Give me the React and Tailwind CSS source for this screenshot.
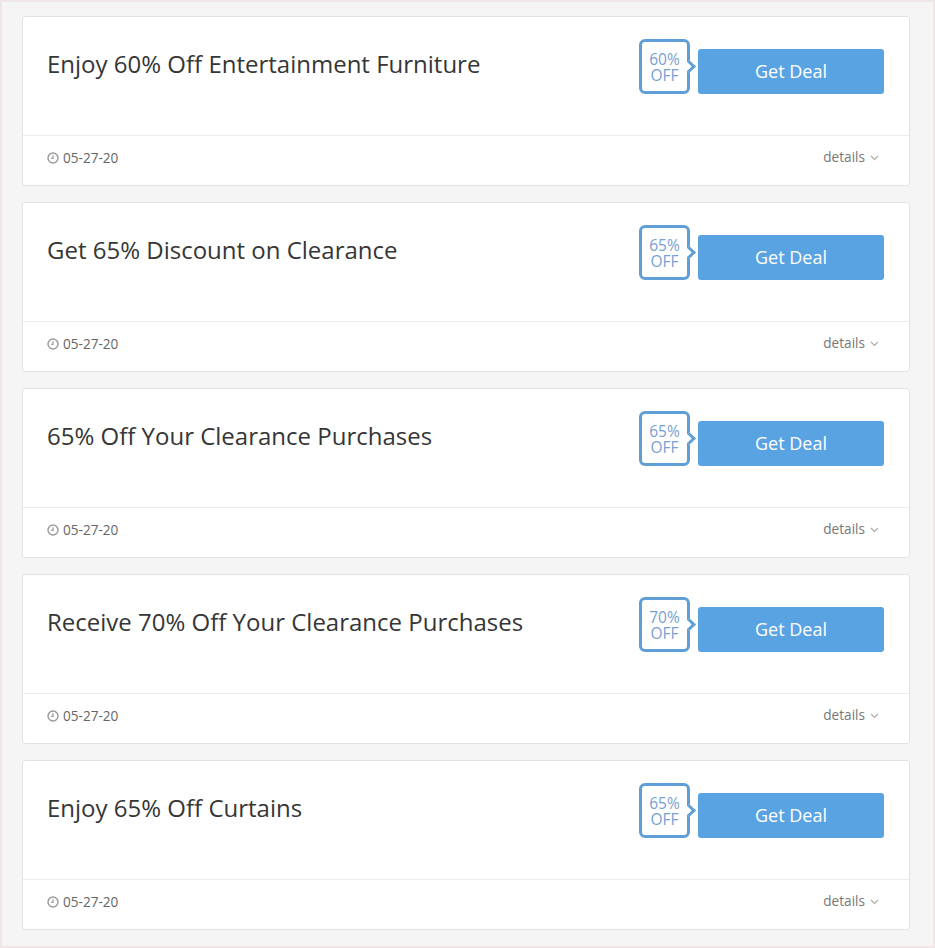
const deals = [
  { title: "Enjoy 60% Off Entertainment Furniture", pct: "60%" },
  { title: "Get 65% Discount on Clearance", pct: "65%" },
  { title: "65% Off Your Clearance Purchases", pct: "65%" },
  { title: "Receive 70% Off Your Clearance Purchases", pct: "70%" },
  { title: "Enjoy 65% Off Curtains", pct: "65%" },
];

function Clock() {
  return (
    <svg width="12" height="12" viewBox="0 0 12 12" className="shrink-0">
      <circle cx="6" cy="6" r="5" fill="none" stroke="#9a9a9a" strokeWidth="1.4" />
      <path d="M6 3.2V6.3H4.2" fill="none" stroke="#9a9a9a" strokeWidth="1.2" />
    </svg>
  );
}

function Chevron() {
  return (
    <svg width="9" height="6" viewBox="0 0 9 6" className="ml-[5px] mt-[2px]">
      <path d="M1 1l3.5 3.5L8 1" fill="none" stroke="#aaa" strokeWidth="1.1" />
    </svg>
  );
}

function DealCard({ title, pct }) {
  return (
    <div className="bg-white border border-[#e3e3e3] rounded-[3px]">
      <div className="h-[118px] flex justify-between pl-6 pr-[25px]">
        <h2 className="pt-[30px] text-[24px] leading-[34px] text-[#363636]">{title}</h2>
        <div className="flex items-start pt-[22px]">
          <div className="relative w-[51px] h-[55px] border-[3px] border-[#5f9fd6] rounded-[6px] bg-white flex flex-col items-center justify-center text-[#779fd3] text-[15.5px] leading-[16px]">
            <span>{pct}</span>
            <span>OFF</span>
            <span className="absolute right-[-7px] top-[20px] w-[9px] h-[9px] rotate-45 bg-white border-t-[3px] border-r-[3px] border-[#5f9fd6]" />
          </div>
          <button className="ml-[8px] mt-[10px] w-[186px] h-[45px] rounded-[3px] bg-[#5aa3e3] text-white text-[18px]">
            Get Deal
          </button>
        </div>
      </div>
      <div className="h-[50px] border-t border-[#ececec] flex items-center justify-between pl-6 pr-[30px] pb-[4px] text-[13.6px]">
        <div className="flex items-center gap-[4px] text-[#666]">
          <Clock />
          <span>05-27-20</span>
        </div>
        <div className="flex items-center text-[#777] -mt-[2px]">
          <span>details</span>
          <Chevron />
        </div>
      </div>
    </div>
  );
}

export default function App() {
  return (
    <div
      className="min-h-[948px] bg-[#f5f5f5] border-2 border-[#f0e6e8] pl-[20px] pr-[23px] pt-[14px] pb-[14px] flex flex-col gap-[16px]"
      style={{ fontFamily: '"Open Sans", sans-serif' }}
    >
      {deals.map((d, i) => (
        <DealCard key={i} {...d} />
      ))}
    </div>
  );
}
